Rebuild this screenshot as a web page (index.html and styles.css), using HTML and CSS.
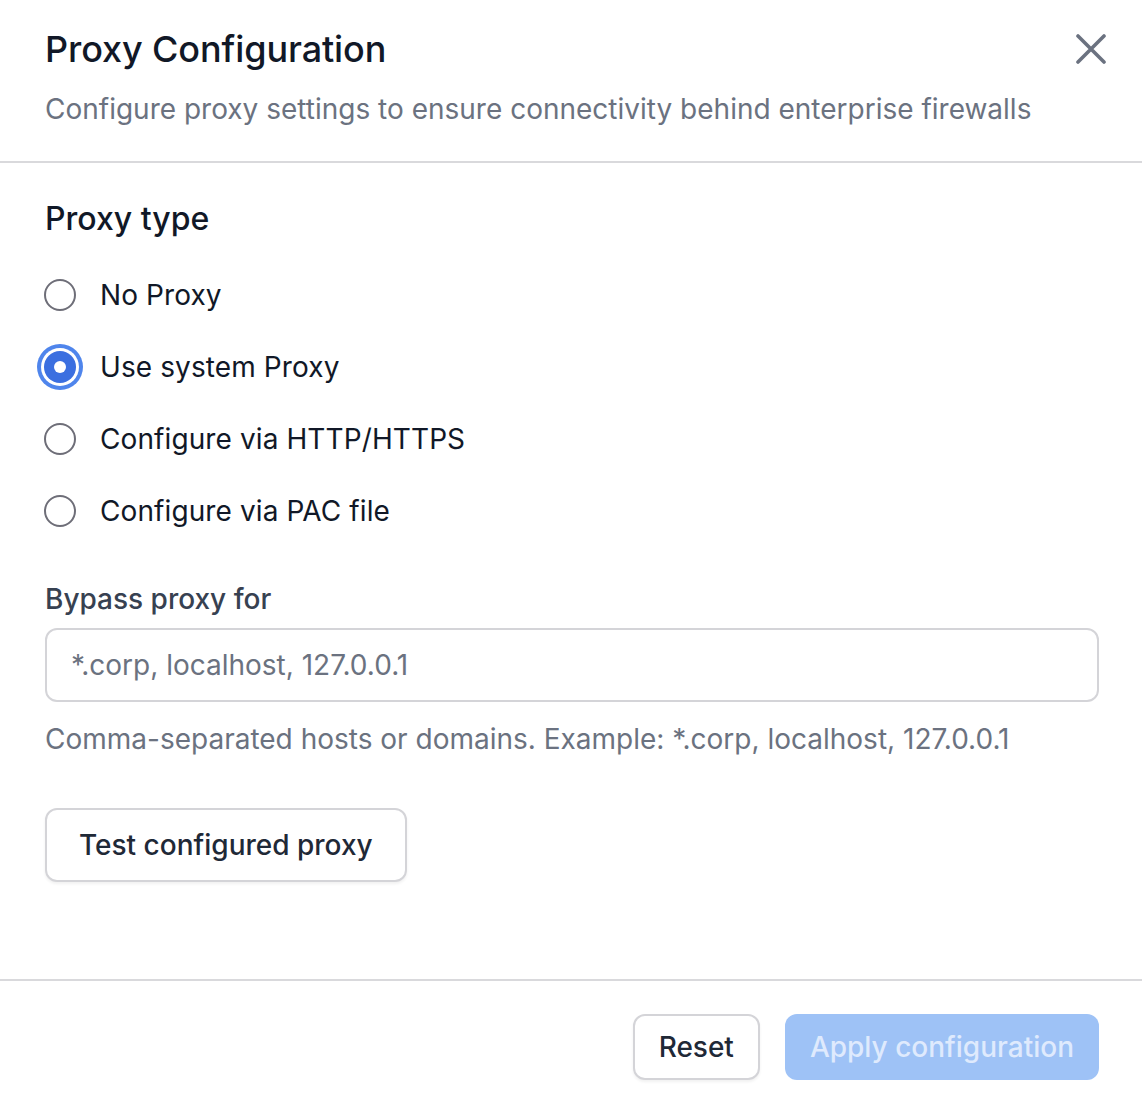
FILE: index.html
```html
<!DOCTYPE html>
<html lang="en">
<head>
<meta charset="utf-8">
<title>Proxy Configuration</title>
<link rel="stylesheet" href="styles.css">
</head>
<body>
<div class="dialog">
  <header class="header">
    <div class="header-text">
      <h1 class="title">Proxy Configuration</h1>
      <p class="subtitle">Configure proxy settings to ensure connectivity behind enterprise firewalls</p>
    </div>
    <button class="close" aria-label="Close">
      <svg width="30" height="30" viewBox="0 0 30 30" fill="none" stroke="currentColor" stroke-width="3.6" stroke-linecap="round"><path d="M2 2 L28 28 M28 2 L2 28"/></svg>
    </button>
  </header>
  <main class="content">
    <h2 class="section-title">Proxy type</h2>
    <div class="radio-group">
      <label class="radio-row"><span class="radio"></span><span class="radio-label">No Proxy</span></label>
      <label class="radio-row"><span class="radio checked"></span><span class="radio-label">Use system Proxy</span></label>
      <label class="radio-row"><span class="radio"></span><span class="radio-label">Configure via HTTP/HTTPS</span></label>
      <label class="radio-row"><span class="radio"></span><span class="radio-label">Configure via PAC file</span></label>
    </div>
    <div class="field">
      <label class="field-label">Bypass proxy for</label>
      <input class="input" type="text" placeholder="*.corp, localhost, 127.0.0.1">
      <p class="helper">Comma-separated hosts or domains. Example: *.corp, localhost, 127.0.0.1</p>
    </div>
    <div class="test-row">
      <button class="btn btn-outline btn-large">Test configured proxy</button>
    </div>
  </main>
  <footer class="footer">
    <button class="btn btn-outline">Reset</button>
    <button class="btn btn-primary" disabled>Apply configuration</button>
  </footer>
</div>
</body>
</html>
```

FILE: styles.css
```css
* { box-sizing: border-box; }
html, body { margin: 0; padding: 0; background: #ffffff; }
body { font-family: Inter, "Noto Sans", sans-serif; color: #111827; }

.dialog {
  width: 1142px;
  height: 1106px;
  display: flex;
  flex-direction: column;
  background: #ffffff;
}

.header {
  display: flex;
  justify-content: space-between;
  align-items: flex-start;
  padding: 28px 36px 34px 45px;
  border-bottom: 2px solid #d9d9dc;
}
.title {
  margin: 0;
  font-size: 36px;
  line-height: 42px;
  font-weight: 500;
  color: #111827;
  letter-spacing: -0.1px;
}
.subtitle {
  margin: 21px 0 0 0;
  font-size: 28px;
  line-height: 36px;
  color: #6b7280;
  font-weight: 400;
}
.close {
  margin-top: 6px;
  padding: 0;
  border: none;
  background: none;
  color: #6b7280;
  width: 30px;
  height: 30px;
  display: flex;
}

.content {
  flex: 1;
  padding: 38px 43px 0 45px;
}
.section-title {
  margin: 0;
  font-size: 32px;
  line-height: 36px;
  font-weight: 500;
  color: #111827;
}
.radio-group {
  margin-top: 38px;
  display: flex;
  flex-direction: column;
  gap: 32px;
}
.radio-row {
  display: flex;
  align-items: center;
  gap: 24px;
  height: 40px;
}
.radio {
  width: 32px;
  height: 32px;
  border-radius: 50%;
  border: 2px solid #6e6e78;
  flex: none;
  position: relative;
  margin-left: -1px;
}
.radio.checked {
  border: none;
  background: #3b6fe0;
  box-shadow: 0 0 0 3px #ffffff, 0 0 0 7px #4f85ec;
}
.radio.checked::after {
  content: "";
  position: absolute;
  left: 10px;
  top: 10px;
  width: 12px;
  height: 12px;
  border-radius: 50%;
  background: #ffffff;
}
.radio-label {
  font-size: 28px;
  line-height: 40px;
  color: #111827;
  font-weight: 400;
  letter-spacing: 0.1px;
}

.field {
  margin-top: 50px;
  display: flex;
  flex-direction: column;
}
.field-label {
  font-size: 28px;
  line-height: 36px;
  font-weight: 500;
  color: #374151;
}
.input {
  margin-top: 11px;
  height: 74px;
  width: 100%;
  border: 2px solid #d4d4d8;
  border-radius: 12px;
  padding: 0 24px;
  font-family: Inter, "Noto Sans", sans-serif;
  font-size: 28px;
  color: #111827;
  background: #ffffff;
  outline: none;
}
.input::placeholder { color: #6b7280; opacity: 1; }
.helper {
  margin: 19px 0 0 0;
  font-size: 28px;
  line-height: 36px;
  color: #6b7280;
}

.test-row { margin-top: 51px; }

.btn {
  font-family: Inter, "Noto Sans", sans-serif;
  font-size: 28px;
  font-weight: 500;
  border-radius: 12px;
  height: 66px;
  padding: 0 24px;
  cursor: pointer;
}
.btn-outline {
  background: #ffffff;
  border: 2px solid #d4d4d8;
  color: #1f2937;
  box-shadow: 0 2px 3px rgba(0, 0, 0, 0.06);
}
.btn-large {
  height: 74px;
  padding: 0 32px;
}
.btn-primary {
  background: #9ec2f6;
  border: none;
  color: #dfeafd;
  padding: 0 25px;
}

.footer {
  border-top: 2px solid #d9d9dc;
  display: flex;
  justify-content: flex-end;
  gap: 25px;
  padding: 33px 43px 26px 45px;
}
```
